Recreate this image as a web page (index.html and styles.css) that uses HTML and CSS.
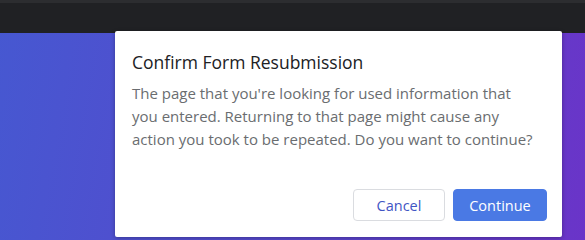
FILE: index.html
```html
<!DOCTYPE html>
<html lang="en">
<head>
    <meta charset="UTF-8">
    <title>Confirm Form Resubmission</title>
    <link rel="stylesheet" href="styles.css">
</head>
<body>
    <div class="topbar"></div>
    <div class="page">
        <div class="dialog">
            <h1 class="dialog-title">Confirm Form Resubmission</h1>
            <p class="dialog-text">The page that you're looking for used information that you entered. Returning to that page might cause any action you took to be repeated. Do you want to continue?</p>
            <div class="dialog-actions">
                <button class="btn cancel">Cancel</button>
                <button class="btn continue">Continue</button>
            </div>
        </div>
    </div>
</body>
</html>
```

FILE: styles.css
```css
body {
    margin: 0;
    width: 585px;
    height: 240px;
    overflow: hidden;
    font-family: 'Open Sans', 'Noto Sans', sans-serif;
    background: linear-gradient(100deg, #4658d1 0%, #5a45cc 60%, #6a34c8 100%);
}
.topbar {
    height: 30px;
    background-color: #202124;
    border-top: 3px solid #2c2d30;
}
.page {
    display: flex;
    padding-left: 115px;
}
.dialog {
    width: 447px;
    height: 206px;
    margin-top: -2px;
    box-sizing: border-box;
    background: #ffffff;
    border-radius: 2px;
    padding: 18px 15px 16px 17px;
    display: flex;
    flex-direction: column;
    box-shadow: 0 1px 4px rgba(0, 0, 0, 0.3);
}
.dialog-title {
    margin: 0;
    font-size: 17.5px;
    font-weight: 400;
    line-height: 26px;
    color: #202124;
}
.dialog-text {
    margin: 7px 0 0;
    font-size: 15px;
    line-height: 23px;
    color: #6a6d70;
    padding-right: 10px;
}
.dialog-actions {
    margin-top: auto;
    display: flex;
    justify-content: flex-end;
    gap: 8px;
}
.btn {
    height: 32px;
    font-family: inherit;
    font-size: 14.5px;
    border-radius: 4px;
    cursor: pointer;
}
.btn.cancel {
    width: 92px;
    background: #ffffff;
    color: #3f55c4;
    border: 1px solid #dadce0;
}
.btn.continue {
    width: 94px;
    background: #4a79e4;
    color: #ffffff;
    border: 1px solid #4a79e4;
}
```
